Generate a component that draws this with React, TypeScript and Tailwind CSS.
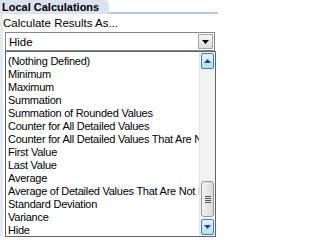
const options = [
  "(Nothing Defined)",
  "Minimum",
  "Maximum",
  "Summation",
  "Summation of Rounded Values",
  "Counter for All Detailed Values",
  "Counter for All Detailed Values That Are Not Null",
  "First Value",
  "Last Value",
  "Average",
  "Average of Detailed Values That Are Not Null",
  "Standard Deviation",
  "Variance",
  "Hide",
];

function ScrollArrow({ up }: { up?: boolean }) {
  return (
    <div className="flex h-[16px] w-full items-center justify-center rounded-[2px] border border-[#3c7fb1] bg-gradient-to-b from-[#e3f4fc] to-[#b6dcf3]">
      <svg width="7" height="4" viewBox="0 0 7 4">
        <path d={up ? "M0 4 L3.5 0 L7 4 Z" : "M0 0 L7 0 L3.5 4 Z"} fill="#1d4f7c" />
      </svg>
    </div>
  );
}

export default function App() {
  return (
    <div className="relative h-[239px] w-[218px] overflow-hidden bg-white font-['Liberation_Sans',Arial,sans-serif] text-[11px] text-black">
      {/* header tab */}
      <div className="flex h-[14px]">
        <div className="h-[14px] w-[109px] rounded-tr-[5px] bg-[#d9e2ee] pl-[2px] text-[11px] font-bold leading-[14px]">
          Local Calculations
        </div>
        <div className="flex-1 border-b-2 border-[#b7c9e3]" />
      </div>

      <div className="flex flex-col border-l-[3px] border-[#e4eaf3]">
        <div className="h-[18px] pt-[2px] text-[11.5px] leading-[14px]">Calculate Results As...</div>

        {/* combo */}
        <div className="ml-[2px] flex h-[19px] w-[210px] items-center justify-between border border-[#828790] bg-white pl-[3px] pr-[1px]">
          <span className="text-[11.5px] leading-[14px]">Hide</span>
          <div className="flex h-[15px] w-[15px] items-center justify-center border border-[#a5a5a5] bg-gradient-to-b from-[#f6f6f6] to-[#dddddd]">
            <svg width="7" height="4" viewBox="0 0 7 4">
              <path d="M0 0 L7 0 L3.5 4 Z" fill="#000" />
            </svg>
          </div>
        </div>

        {/* dropdown list */}
        <div className="ml-[2px] flex h-[186px] w-[211px] border border-[#646464] bg-white">
          <div className="min-w-0 flex-1 overflow-hidden pt-[3px] pl-[2px]">
            {options.map((o) => (
              <div key={o} className="h-[13px] whitespace-nowrap text-[11px] leading-[13px] tracking-[-0.25px]">
                {o}
              </div>
            ))}
          </div>
          <div className="flex w-[16px] flex-col border-l border-[#e3e3e3] bg-[#f3f3f3] px-[1px] py-[1px]">
            <ScrollArrow up />
            <div className="flex-1" />
            <div className="flex h-[36px] items-center justify-center rounded-[3px] border border-[#979797] bg-gradient-to-r from-[#f2f2f2] to-[#d9d9d9]">
              <div className="flex flex-col gap-[1px]">
                <div className="h-[1px] w-[6px] bg-[#555]" />
                <div className="h-[1px] w-[6px] bg-[#555]" />
                <div className="h-[1px] w-[6px] bg-[#555]" />
                <div className="h-[1px] w-[6px] bg-[#555]" />
              </div>
            </div>
            <div className="h-[2px]" />
            <ScrollArrow />
          </div>
        </div>
      </div>
    </div>
  );
}
